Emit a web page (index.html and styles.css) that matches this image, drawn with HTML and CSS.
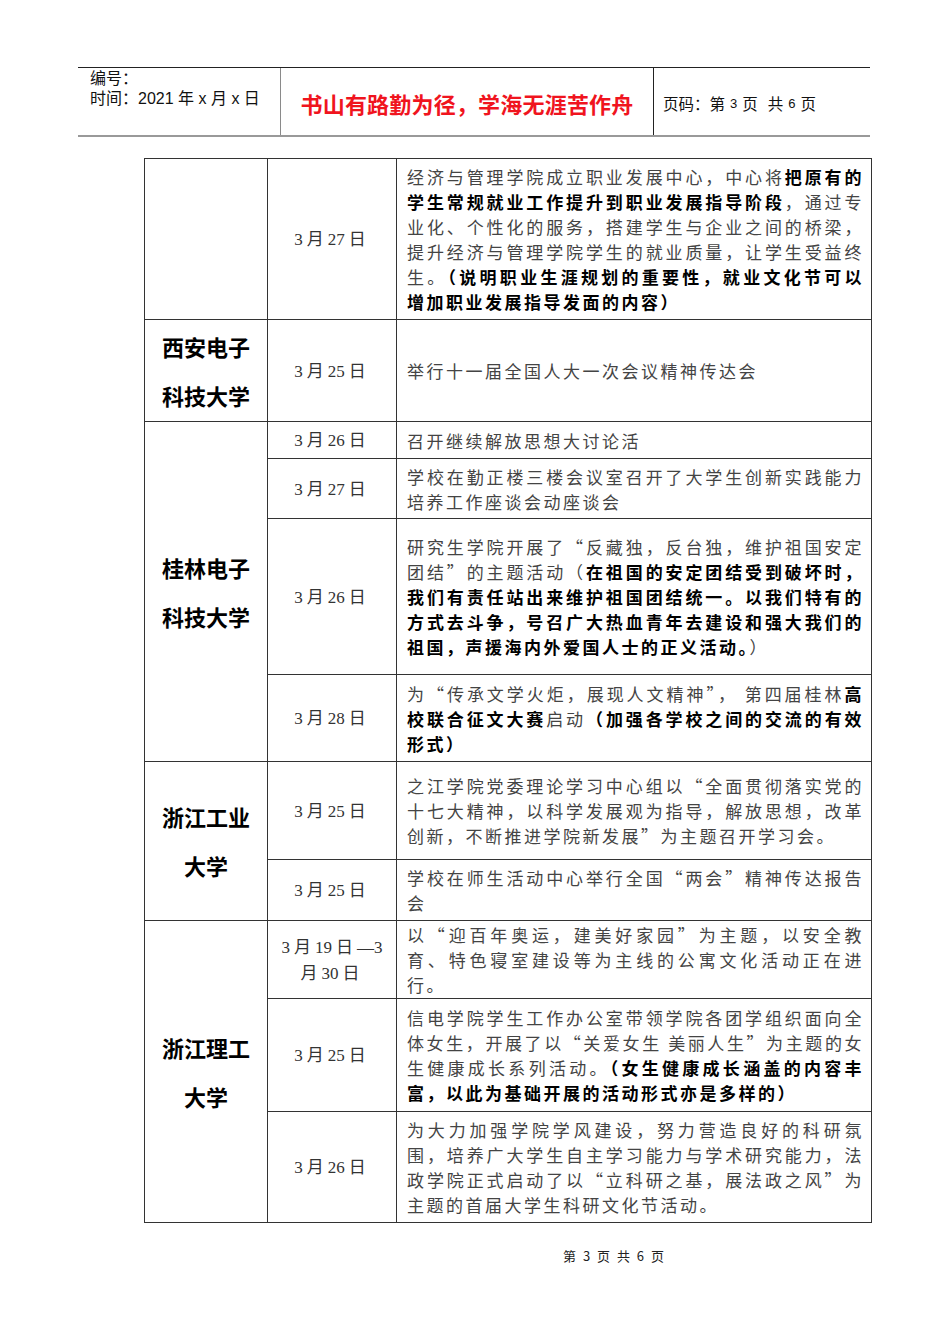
FILE: index.html
```html
<!DOCTYPE html>
<html lang="zh-CN">
<head>
<meta charset="utf-8">
<title>书山有路勤为径，学海无涯苦作舟</title>
<link rel="stylesheet" href="styles.css">
</head>
<body>
<div class="page">
  <header class="header">
    <div class="hcell hleft">
      <div>编号：</div>
      <div>时间：2021 年 x 月 x 日</div>
    </div>
    <div class="hcell hmid">书山有路勤为径，学海无涯苦作舟</div>
    <div class="hcell hright">页码：第<span class="hn">3</span>页<span class="gap"></span>共<span class="hn">6</span>页</div>
  </header>

  <table class="tbl">
    <colgroup>
      <col class="c1">
      <col class="c2">
      <col class="c3">
    </colgroup>
    <tbody>
      <tr class="rA">
        <td class="uni"></td>
        <td class="date">3<span class="n">月</span>27<span class="n">日</span></td>
        <td class="txt">经济与管理学院成立职业发展中心，中心将<b>把原有的学生常规就业工作提升到职业发展指导阶段</b>，通过专业化、个性化的服务，搭建学生与企业之间的桥梁，提升经济与管理学院学生的就业质量，让学生受益终生。<b>（说明职业生涯规划的重要性，就业文化节可以增加职业发展指导发面的内容）</b></td>
      </tr>
      <tr class="rB">
        <td class="uni">西安电子科技大学</td>
        <td class="date">3<span class="n">月</span>25<span class="n">日</span></td>
        <td class="txt">举行十一届全国人大一次会议精神传达会</td>
      </tr>
      <tr class="rC">
        <td class="uni" rowspan="4">桂林电子科技大学</td>
        <td class="date">3<span class="n">月</span>26<span class="n">日</span></td>
        <td class="txt">召开继续解放思想大讨论活</td>
      </tr>
      <tr class="rD">
        <td class="date">3<span class="n">月</span>27<span class="n">日</span></td>
        <td class="txt">学校在勤正楼三楼会议室召开了大学生创新实践能力培养工作座谈会动座谈会</td>
      </tr>
      <tr class="rE">
        <td class="date">3<span class="n">月</span>26<span class="n">日</span></td>
        <td class="txt">研究生学院开展了“反藏独，反台独，维护祖国安定团结”的主题活动（<b>在祖国的安定团结受到破坏时，我们有责任站出来维护祖国团结统一。以我们特有的方式去斗争，号召广大热血青年去建设和强大我们的祖国，声援海内外爱国人士的正义活动。</b>）</td>
      </tr>
      <tr class="rF">
        <td class="date">3<span class="n">月</span>28<span class="n">日</span></td>
        <td class="txt">为“传承文学火炬，展现人文精神”， 第四届桂林<b>高校联合征文大赛</b>启动<b>（加强各学校之间的交流的有效形式）</b></td>
      </tr>
      <tr class="rG">
        <td class="uni" rowspan="2">浙江工业大学</td>
        <td class="date">3<span class="n">月</span>25<span class="n">日</span></td>
        <td class="txt">之江学院党委理论学习中心组以“全面贯彻落实党的十七大精神，以科学发展观为指导，解放思想，改革创新，不断推进学院新发展”为主题召开学习会。</td>
      </tr>
      <tr class="rH">
        <td class="date">3<span class="n">月</span>25<span class="n">日</span></td>
        <td class="txt">学校在师生活动中心举行全国“两会”精神传达报告会</td>
      </tr>
      <tr class="rI">
        <td class="uni" rowspan="3">浙江理工大学</td>
        <td class="date">3<span class="n">月</span>19<span class="n">日</span>—3<br><span class="n n0">月</span>30<span class="n">日</span></td>
        <td class="txt">以“迎百年奥运，建美好家园”为主题，以安全教育、特色寝室建设等为主线的公寓文化活动正在进行。</td>
      </tr>
      <tr class="rJ">
        <td class="date">3<span class="n">月</span>25<span class="n">日</span></td>
        <td class="txt">信电学院学生工作办公室带领学院各团学组织面向全体女生，开展了以“关爱女生 美丽人生”为主题的女生健康成长系列活动。<b>（女生健康成长涵盖的内容丰富，以此为基础开展的活动形式亦是多样的）</b></td>
      </tr>
      <tr class="rK">
        <td class="date">3<span class="n">月</span>26<span class="n">日</span></td>
        <td class="txt">为大力加强学院学风建设，努力营造良好的科研氛围，培养广大学生自主学习能力与学术研究能力，法政学院正式启动了以“立科研之基，展法政之风”为主题的首届大学生科研文化节活动。</td>
      </tr>
    </tbody>
  </table>

  <footer class="footer">第 3 页 共 6 页</footer>
</div>
</body>
</html>
```

FILE: styles.css
```css
html, body {
  margin: 0;
  padding: 0;
  background: #ffffff;
}

.page {
  width: 950px;
  padding-top: 67px;
  font-family: "Noto Sans CJK SC", sans-serif;
  color: #222;
}

/* ---------- header ---------- */
.header {
  margin-left: 78px;
  width: 792px;
  height: 67px;
  display: grid;
  grid-template-columns: 203px 373px 1fr;
  border-top: 1px solid #222;
  border-bottom: 2px solid #999;
}

.hcell {
  box-sizing: border-box;
  height: 100%;
}

.hleft {
  border-right: 1px solid #8a8a8a;
  padding: 1px 0 0 12px;
  font-family: "Liberation Sans", "Noto Sans CJK SC", sans-serif;
  font-size: 16px;
  line-height: 20px;
  color: #111;
}

.hmid {
  border-right: 1px solid #222;
  display: flex;
  align-items: center;
  justify-content: center;
  padding-top: 3px;
  font-size: 22px;
  font-weight: 700;
  color: #f0141e;
  letter-spacing: 0.2px;
}

.hright {
  display: flex;
  align-items: center;
  padding: 3px 0 0 9px;
  font-size: 15.5px;
  color: #111;
}

.hn {
  font-family: "Liberation Sans Narrow", "Liberation Sans", sans-serif;
  font-size: 13px;
  margin: 0 5px;
}

.gap {
  display: inline-block;
  width: 10px;
}

/* ---------- table ---------- */
.tbl {
  margin: 21px 0 0 144px;
  width: 727px;
  table-layout: fixed;
  border-collapse: collapse;
  border: 1.5px solid #666;
}

.c1 { width: 123px; }
.c2 { width: 129px; }
.c3 { width: 475px; }

.tbl td {
  border: 1px solid #333;
  padding: 0;
  vertical-align: middle;
}

.tbl .uni {
  padding: 0 16px;
  text-align: center;
  font-size: 22px;
  font-weight: 700;
  line-height: 49px;
  color: #000;
}

.tbl .date {
  text-align: center;
  font-family: "Liberation Serif", "Noto Sans CJK SC", serif;
  font-size: 17px;
  line-height: 24px;
  color: #333;
}

.date .n {
  font-family: "Noto Sans CJK SC", sans-serif;
  margin: 0 4px;
}

.date .n0 {
  margin-left: 0;
}

.tbl .txt {
  padding: 0 7px 0 10px;
  font-size: 17px;
  line-height: 25px;
  letter-spacing: 2.5px;
  text-align: justify;
  color: #444;
}

.txt b {
  color: #000;
  font-weight: 700;
}

.rA { height: 161px; }
.rB { height: 102px; }
.rC { height: 37px; }
.rD { height: 60px; }
.rE { height: 156px; }
.rF { height: 87px; }
.rG { height: 98px; }
.rH { height: 61px; }
.rI { height: 78px; }
.rJ { height: 113px; }
.rK { height: 111px; }

/* ---------- footer ---------- */
.footer {
  margin: 25px 0 0 563px;
  font-size: 13px;
  line-height: 16px;
  word-spacing: 4px;
  color: #222;
}
```
